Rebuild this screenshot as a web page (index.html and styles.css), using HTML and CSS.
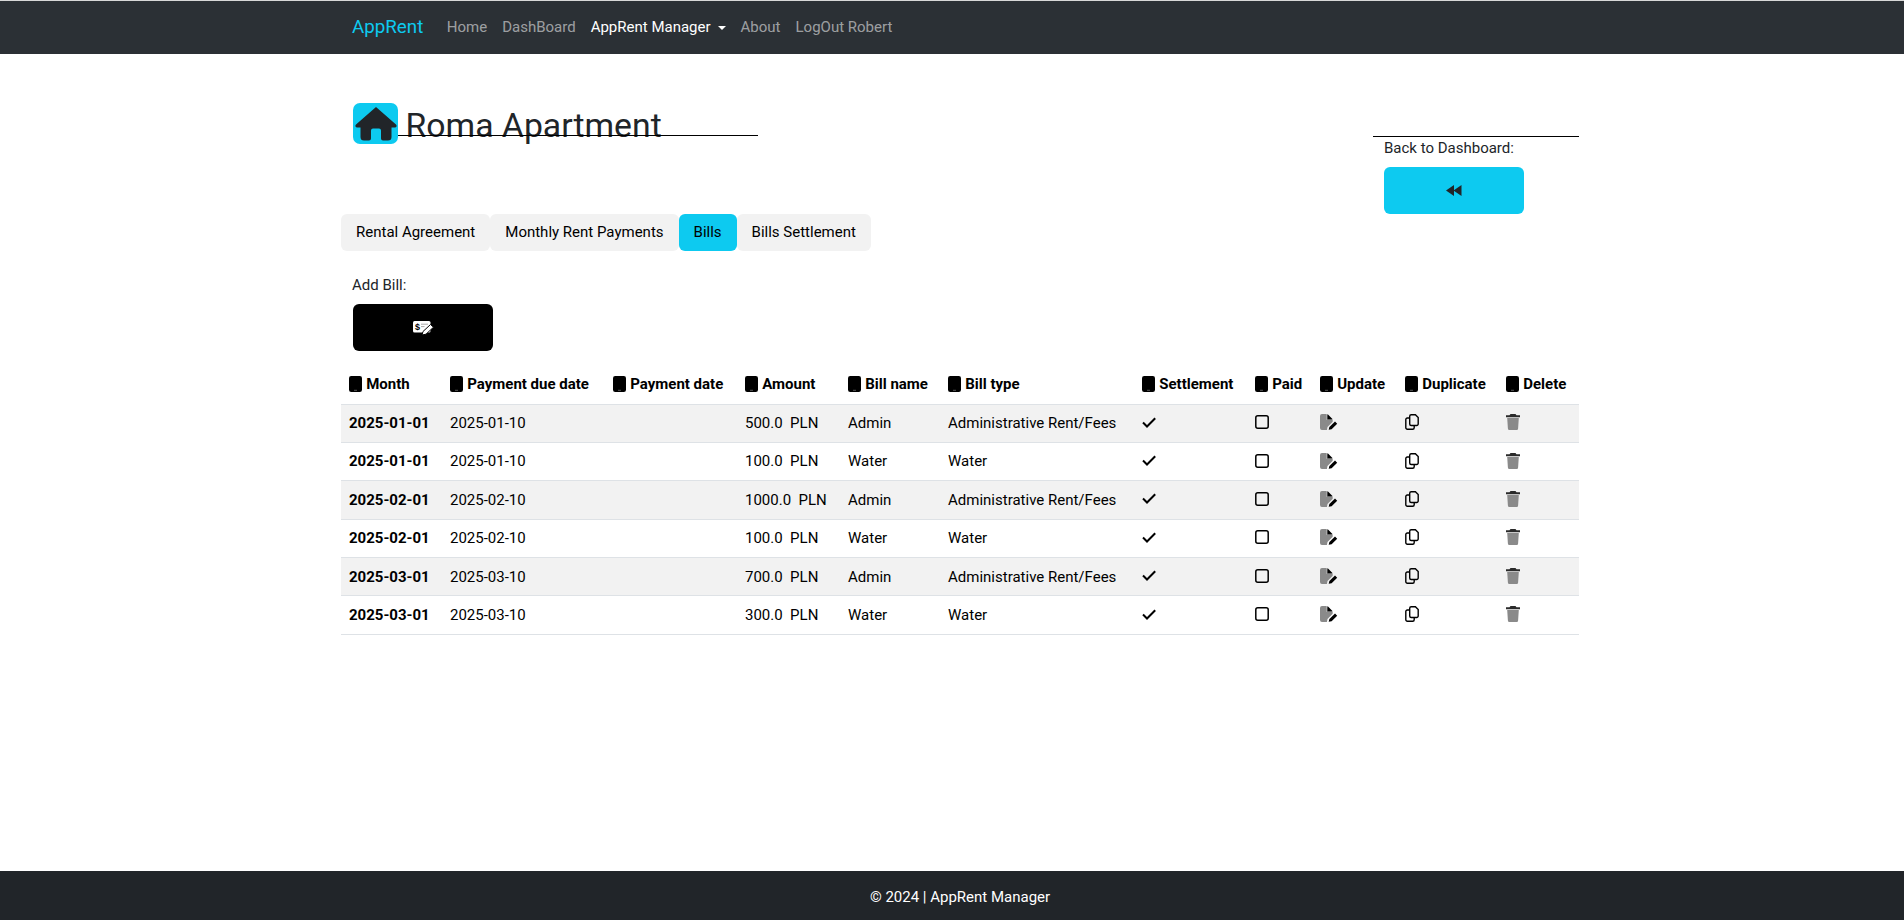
FILE: index.html
```html
<!DOCTYPE html>
<html lang="en">
<head>
  <meta charset="UTF-8" />
  <title>Bills - AppRent</title>
  <link rel="stylesheet" href="styles.css">
</head>
<body>

<svg class="icon-defs" width="0" height="0">
  <symbol id="i-mobile" viewBox="0 0 13 16">
    <rect width="13" height="16" rx="2.2" fill="#000"/>
    <rect x="5" y="13.800" width="3" height="1" fill="#555"/>
  </symbol>
  <symbol id="i-check" viewBox="0 0 14 11">
    <path d="M1 5.500l4 4L13.200 1.200" fill="none" stroke="#000" stroke-width="2"/>
  </symbol>
  <symbol id="i-square" viewBox="0 0 14 14">
    <rect x=".8" y=".8" width="12.400" height="12.400" rx="2" fill="none" stroke="#000" stroke-width="1.500"/>
  </symbol>
  <symbol id="i-update" viewBox="0 0 18 16">
    <path d="M2 0h4.500v6H12.700v1.800L7.500 13l-.6 3H2a2 2 0 0 1-2-2V2a2 2 0 0 1 2-2z" fill="#8a8a8a"/>
    <path d="M6.500 0l6.200 6H6.500z" fill="#8a8a8a"/>
    <path d="M7.500 0l5.200 5.200H7.500z" fill="#000"/>
    <path d="M8.700 15.800l.7-2.800 5.600-5.500 2.200 2.200-5.600 5.500z" fill="#000"/>
  </symbol>
  <symbol id="i-copy" viewBox="0 0 14 16">
    <path d="M4.700 10V2.300a1.500 1.500 0 0 1 1.500-1.500h4.200l2.800 2.800V10a1.500 1.500 0 0 1-1.500 1.500H6.200A1.500 1.500 0 0 1 4.700 10z" fill="none" stroke="#000" stroke-width="1.400"/>
    <path d="M4.700 4H2.300A1.500 1.500 0 0 0 .8 5.500v8.200a1.500 1.500 0 0 0 1.500 1.500h5.400a1.500 1.500 0 0 0 1.500-1.500v-2.200" fill="none" stroke="#000" stroke-width="1.400"/>
  </symbol>
  <symbol id="i-trash" viewBox="0 0 14 16">
    <path d="M4.500 0h5l1 1.300H14v2H0v-2h3.500z" fill="#2a2a2a"/>
    <path d="M1.200 4h11.600l-.7 10.500A1.500 1.500 0 0 1 10.600 16H3.400a1.500 1.500 0 0 1-1.500-1.500z" fill="#8a8a8a"/>
  </symbol>
</svg>

<nav class="navbar">
  <a class="brand" href="#">AppRent</a>
  <a class="nav-link" href="#">Home</a>
  <a class="nav-link" href="#">DashBoard</a>
  <a class="nav-link active dropdown" href="#">AppRent Manager</a>
  <a class="nav-link" href="#">About</a>
  <a class="nav-link" href="#">LogOut Robert</a>
</nav>

<main class="page">
  <div class="top-row">
    <h1 class="title">
      <span class="title-icon">
        <svg viewBox="0 0 42 34" width="42" height="34"><path d="M21 0L41 17.500a1.700 1.700 0 0 1-1.200 3H36.500V30a3.500 3.500 0 0 1-3.500 3.500H28a2 2 0 0 1-2-2V23.500a2 2 0 0 0-2-2H18a2 2 0 0 0-2 2v8a2 2 0 0 1-2 2H9A3.500 3.500 0 0 1 5.500 30V20.500H2.200a1.700 1.700 0 0 1-1.200-3z" fill="#212529"/></svg>
      </span>
      <span class="title-text">Roma Apartment</span>
    </h1>
    <div class="back-box">
      <div class="label">Back to Dashboard:</div>
      <button class="btn btn-info">
        <svg viewBox="0 0 16 11" width="16" height="11"><path d="M8 0v11L0 5.500zM15.500 0v11l-8-5.500z" fill="#212529"/></svg>
      </button>
    </div>
  </div>

  <div class="tabs">
    <a class="tab" href="#">Rental Agreement</a>
    <a class="tab" href="#">Monthly Rent Payments</a>
    <a class="tab tab-active" href="#">Bills</a>
    <a class="tab" href="#">Bills Settlement</a>
  </div>

  <div class="add-box">
    <div class="label">Add Bill:</div>
    <button class="btn btn-black">
      <svg viewBox="0 0 21 14" width="21" height="14">
        <rect x="0" y="0" width="17.500" height="11.500" rx="1.500" fill="#fff"/>
        <text x="2" y="9" class="check-sign">$</text>
        <path d="M8 3.200h7M8 5.600h3.500" stroke="#aaa" stroke-width="1"/>
        <path d="M9 14l1-3.500 7.500-7 3 2.700-7.500 7z" fill="#fff" stroke="#000" stroke-width="1"/>
      </svg>
    </button>
  </div>

  <table class="bills">
    <colgroup>
      <col class="c-month"><col class="c-due"><col class="c-pay"><col class="c-amount"><col class="c-name"><col class="c-type"><col class="c-settle"><col class="c-paid"><col class="c-update"><col class="c-dup"><col class="c-del">
    </colgroup>
    <thead>
      <tr id="headRow"></tr>
    </thead>
    <tbody id="rows"></tbody>
  </table>
</main>

<footer class="footer">© 2024 | AppRent Manager</footer>

<script>
  const heads = ["Month", "Payment due date", "Payment date", "Amount", "Bill name", "Bill type", "Settlement", "Paid", "Update", "Duplicate", "Delete"];
  const bills = [
    ["2025-01-01", "2025-01-10", "500.0", "Admin", "Administrative Rent/Fees"],
    ["2025-01-01", "2025-01-10", "100.0", "Water", "Water"],
    ["2025-02-01", "2025-02-10", "1000.0", "Admin", "Administrative Rent/Fees"],
    ["2025-02-01", "2025-02-10", "100.0", "Water", "Water"],
    ["2025-03-01", "2025-03-10", "700.0", "Admin", "Administrative Rent/Fees"],
    ["2025-03-01", "2025-03-10", "300.0", "Water", "Water"]
  ];

  function icon(name, cls) {
    return `<svg class="${cls}"><use href="#i-${name}"></use></svg>`;
  }

  document.getElementById("headRow").innerHTML = heads.map(h =>
    `<th>${icon("mobile", "ico-head")} ${h}</th>`).join("");

  document.getElementById("rows").innerHTML = bills.map(b => `
    <tr>
      <th>${b[0]}</th>
      <td>${b[1]}</td>
      <td></td>
      <td>${b[2]}&nbsp; PLN</td>
      <td>${b[3]}</td>
      <td>${b[4]}</td>
      <td>${icon("check", "ico ico-check")}</td>
      <td>${icon("square", "ico ico-14")}</td>
      <td>${icon("update", "ico ico-update")}</td>
      <td>${icon("copy", "ico ico-copy")}</td>
      <td>${icon("trash", "ico ico-copy")}</td>
    </tr>`).join("");
</script>

</body>
</html>
```

FILE: styles.css
```css
* {
  box-sizing: border-box;
}
body {
  margin: 0;
  min-height: 920px;
  display: flex;
  flex-direction: column;
  background: #fff;
  color: #212529;
  font-family: Roboto, "Liberation Sans", sans-serif;
  font-size: 15px;
  line-height: 1.5;
}
.icon-defs {
  position: absolute;
}

.navbar {
  height: 54px;
  padding-left: 352px;
  display: flex;
  align-items: center;
  background: #2b3035;
  border-top: 1px solid #d8d8d8;
}
.brand {
  font-size: 18.750px;
  color: #0dcaf0;
  text-decoration: none;
  margin-right: 16px;
}
.nav-link {
  padding: 0 7.500px;
  color: rgba(255,255,255,0.55);
  text-decoration: none;
}
.nav-link.active {
  color: #fff;
}
.dropdown::after {
  content: "";
  display: inline-block;
  margin-left: 7px;
  vertical-align: 2.500px;
  border-top: 4.500px solid;
  border-left: 4.500px solid transparent;
  border-right: 4.500px solid transparent;
}

.page {
  flex: 1;
  width: 1238px;
  margin-left: 341px;
}
.top-row {
  display: flex;
  justify-content: space-between;
  height: 160px;
}
.title {
  position: relative;
  margin: 49px 0 0;
  padding-left: 12px;
  width: 417px;
  height: 41px;
  display: flex;
  align-items: center;
  gap: 7.500px;
  font-size: 33.750px;
  font-weight: 400;
  line-height: 41px;
  white-space: nowrap;
}
.title::after {
  content: "";
  position: absolute;
  left: 57px;
  right: 0;
  top: 32px;
  border-top: 1px solid #000;
}
.title-text {
  padding-top: 3px;
}
.title-icon {
  width: 45px;
  height: 41px;
  flex: none;
  display: flex;
  align-items: center;
  justify-content: center;
  background: #0dcaf0;
  border-radius: 7px;
}
.back-box {
  width: 206px;
  margin-top: 82px;
  padding-left: 11px;
  border-top: 1px solid #000;
}
.label {
  line-height: 23px;
  margin-bottom: 7px;
}
.btn {
  width: 140px;
  height: 47px;
  border: none;
  border-radius: 6px;
  display: flex;
  align-items: center;
  justify-content: center;
  cursor: pointer;
}
.btn-info {
  background: #0dcaf0;
}
.btn-black {
  background: #000;
}
.check-sign {
  font-size: 9px;
  font-weight: 700;
  fill: #000;
}

.tabs {
  display: flex;
}
.tab {
  padding: 8px 15px;
  line-height: 21px;
  background: #f2f2f2;
  color: #000;
  text-decoration: none;
  border-radius: 6px;
}
.tab-active {
  background: #0dcaf0;
}

.add-box {
  padding: 23px 0 0 12px;
}
.add-box .label {
  margin-left: -1px;
}

.bills {
  width: 1238px;
  margin-top: 1px;
  table-layout: fixed;
  border-collapse: collapse;
  color: #000;
}
.c-month { width: 101px; }
.c-due { width: 163px; }
.c-pay { width: 132px; }
.c-amount { width: 103px; }
.c-name { width: 100px; }
.c-type { width: 194px; }
.c-settle { width: 113px; }
.c-paid { width: 65px; }
.c-update { width: 85px; }
.c-dup { width: 101px; }
.c-del { width: 81px; }

.bills th,
.bills td {
  padding: 0 8px;
  height: 38.400px;
  text-align: left;
  white-space: nowrap;
  border-bottom: 1px solid #dee2e6;
}
.bills thead th {
  height: 52px;
  padding-top: 13px;
}
.bills tbody tr:nth-child(odd) {
  background: #f2f2f2;
}
.ico-head {
  width: 13px;
  height: 16px;
  vertical-align: -2.500px;
  margin-right: .5px;
}
.ico {
  display: block;
  margin-top: -2px;
}
.ico-check {
  width: 14px;
  height: 11px;
}
.ico-14 {
  width: 14px;
  height: 14px;
}
.ico-copy {
  width: 14px;
  height: 16px;
}
.ico-update {
  width: 18px;
  height: 16px;
}

.footer {
  height: 49px;
  padding: 3px 0 0 16px;
  display: flex;
  align-items: center;
  justify-content: center;
  background: #212529;
  color: #fff;
}
```
